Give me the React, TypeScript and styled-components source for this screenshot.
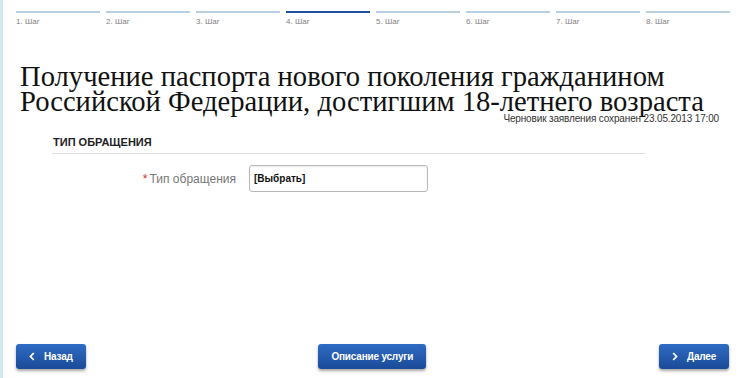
import * as React from 'react'
import styled, { createGlobalStyle } from 'styled-components'

const GlobalStyle = createGlobalStyle`
  html, body {
    margin: 0;
    padding: 0;
    background: #fff;
  }
  body {
    font-family: 'Liberation Sans', Arial, sans-serif;
  }
`

const steps = ['1. Шаг', '2. Шаг', '3. Шаг', '4. Шаг', '5. Шаг', '6. Шаг', '7. Шаг', '8. Шаг']
const activeStep = 3

const Chevron: React.FC<{ dir: 'left' | 'right' }> = ({ dir }) => (
  <svg width='6' height='9' viewBox='0 0 6 9'>
    <path
      d={dir === 'left' ? 'M4.8 1 L1.5 4.5 L4.8 8' : 'M1.2 1 L4.5 4.5 L1.2 8'}
      fill='none'
      stroke='#fff'
      strokeWidth='1.8'
    />
  </svg>
)

const App: React.FC = () => {
  return (
    <>
      <GlobalStyle />
      <Page>
        <StepBar>
          {steps.map((s, i) => (
            <Step key={s} active={i === activeStep}>
              {s}
            </Step>
          ))}
        </StepBar>

        <Title>
          Получение паспорта нового поколения гражданином
          <br />
          Российской Федерации, достигшим 18-летнего возраста
        </Title>
        <Draft>Черновик заявления сохранен 23.05.2013 17:00</Draft>

        <Section>
          <SectionHeader>ТИП ОБРАЩЕНИЯ</SectionHeader>
          <FieldRow>
            <FieldLabel>
              <Required>*</Required>Тип обращения
            </FieldLabel>
            <SelectBox>[Выбрать]</SelectBox>
          </FieldRow>
        </Section>

        <Footer>
          <NavButton>
            <Chevron dir='left' />
            Назад
          </NavButton>
          <NavButton>Описание услуги</NavButton>
          <NavButton>
            <Chevron dir='right' />
            Далее
          </NavButton>
        </Footer>
      </Page>
    </>
  )
}

export default App

const Page = styled.div`
  box-sizing: border-box;
  width: 740px;
  height: 378px;
  border-left: 3px solid #d3e8f0;
  display: flex;
  flex-direction: column;
  overflow: hidden;
`

const StepBar = styled.div`
  display: flex;
  gap: 6px;
  padding: 11px 0 0 13px;
`

const Step = styled.div<{ active?: boolean }>`
  width: 84px;
  box-sizing: border-box;
  border-top: 2px solid ${(p) => (p.active ? '#1d4f9e' : '#b6cfe3')};
  padding-top: 4px;
  font-size: 8px;
  line-height: 10px;
  color: #7f7f7f;
`

const Title = styled.h1`
  margin: 37px 0 0 17px;
  font-family: 'Liberation Serif', 'Times New Roman', serif;
  font-weight: normal;
  font-size: 28.6px;
  line-height: 25px;
  color: #111;
`

const Draft = styled.div`
  align-self: flex-end;
  margin: -1px 21px 0 0;
  font-size: 10px;
  line-height: 12px;
  letter-spacing: -0.15px;
  color: #333;
`

const Section = styled.div`
  margin: 11px 0 0 49px;
  width: 593px;
`

const SectionHeader = styled.div`
  font-size: 11px;
  font-weight: bold;
  color: #222;
  line-height: 13px;
  padding: 0 0 4px 1px;
  border-bottom: 1px solid #dedede;
`

const FieldRow = styled.div`
  display: flex;
  align-items: center;
  margin-top: 11px;
`

const FieldLabel = styled.div`
  width: 184px;
  text-align: right;
  font-size: 12px;
  color: #777;
  padding-right: 13px;
`

const Required = styled.span`
  color: #d9262a;
  margin-right: 2px;
`

const SelectBox = styled.div`
  box-sizing: border-box;
  width: 179px;
  height: 27px;
  border: 1px solid #b9b9b9;
  border-radius: 3px;
  box-shadow: inset 0 1px 2px rgba(0, 0, 0, 0.08);
  padding: 0 4px;
  display: flex;
  align-items: center;
  font-size: 10px;
  font-weight: bold;
  color: #111;
`

const Footer = styled.div`
  margin-top: auto;
  display: flex;
  justify-content: space-between;
  padding: 0 11px 9px 13px;
`

const NavButton = styled.button`
  box-sizing: border-box;
  height: 25px;
  padding: 0 13px;
  display: flex;
  align-items: center;
  gap: 9px;
  border: none;
  border-radius: 3px;
  background: linear-gradient(#2f6cc4, #1a4a98);
  box-shadow: 0 2px 3px rgba(0, 0, 0, 0.35);
  color: #fff;
  font-family: 'Liberation Sans Narrow', 'Liberation Sans', Arial, sans-serif;
  font-size: 10px;
  font-weight: bold;
  letter-spacing: -0.2px;
`
